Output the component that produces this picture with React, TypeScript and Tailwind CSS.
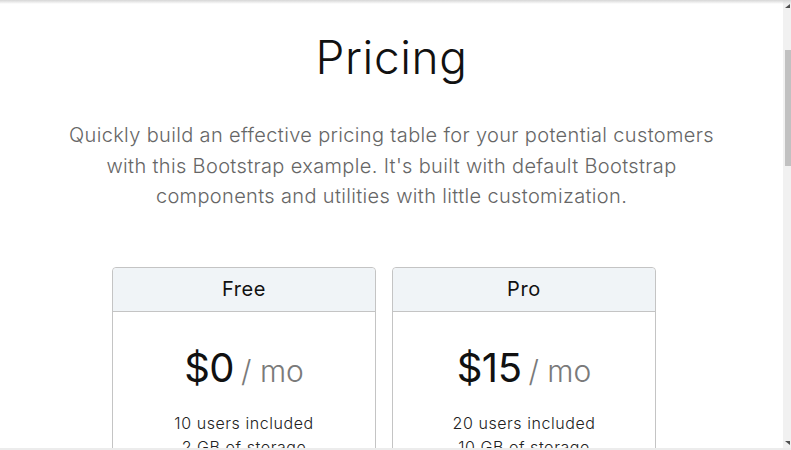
import React from "react";

type Plan = {
  name: string;
  price: string;
  features: string[];
};

const plans: Plan[] = [
  {
    name: "Free",
    price: "$0",
    features: ["10 users included", "2 GB of storage", "Email support", "Help center access"],
  },
  {
    name: "Pro",
    price: "$15",
    features: ["20 users included", "10 GB of storage", "Priority email support", "Help center access"],
  },
];

const font = { fontFamily: "Inter, 'Open Sans', sans-serif" };

const PlanCard = ({ plan }: { plan: Plan }) => (
  <div className="w-[264px] shrink-0 rounded-[4px] border border-[#c4c4c4] bg-white">
    <div className="flex h-[44px] items-center justify-center rounded-t-[4px] border-b border-[#c4c4c4] bg-[#f0f4f7]">
      <h4 className="text-[20px] font-normal tracking-[0.6px] text-[#111]">{plan.name}</h4>
    </div>
    <div className="px-5 pt-8 text-center">
      <h1 className="text-[40px] leading-[48px] font-normal tracking-[-0.5px] text-[#111]">
        {plan.price}
        <small className="ml-[7px] text-[30px] font-light tracking-normal text-[#7a7a7a]">/ mo</small>
      </h1>
      <ul className="mt-4 text-[16px] leading-[24px] font-light tracking-[0.55px] text-[#222]">
        {plan.features.map((f) => (
          <li key={f}>{f}</li>
        ))}
      </ul>
    </div>
  </div>
);

export default function App() {
  return (
    <div className="relative flex h-[450px] w-full overflow-hidden bg-white" style={font}>
      {/* Page */}
      <main className="flex-1">
        <div className="pt-[30px] text-center">
          <h1 className="text-[46px] leading-[55px] font-light tracking-[0.6px] text-[#111]">Pricing</h1>
          <p className="mt-[35px] text-[20px] leading-[30.5px] font-light tracking-[0.35px] text-[#666]">
            Quickly build an effective pricing table for your potential customers
            <br />
            with this Bootstrap example. It's built with default Bootstrap
            <br />
            components and utilities with little customization.
          </p>
        </div>

        <div className="mt-[55px] flex gap-4 pl-[112px]">
          {plans.map((p) => (
            <PlanCard key={p.name} plan={p} />
          ))}
        </div>
      </main>

      {/* Scrollbar */}
      <div className="flex w-2 shrink-0 flex-col bg-[#f1f1f1]">
        <div className="flex h-[12px] items-center justify-end pr-[1px]">
          <svg width="5" height="4" viewBox="0 0 5 4">
            <path d="M0 4 L5 4 L5 0 Z" fill="#505050" />
          </svg>
        </div>
        <div className="mt-[38px] h-[116px] w-[6px] self-end bg-[#c1c1c1]" />
        <div className="flex-1" />
        <div className="flex h-[14px] items-center justify-end pr-[1px]">
          <svg width="5" height="4" viewBox="0 0 5 4">
            <path d="M0 0 L5 0 L5 4 Z" fill="#505050" />
          </svg>
        </div>
      </div>

      {/* Window edge shadows */}
      <div className="pointer-events-none absolute inset-x-0 top-0 h-[4px] bg-gradient-to-b from-[#d6d6d6] to-transparent" />
      <div className="pointer-events-none absolute inset-x-0 bottom-0 h-[2px] bg-[#ececec]" />
    </div>
  );
}
